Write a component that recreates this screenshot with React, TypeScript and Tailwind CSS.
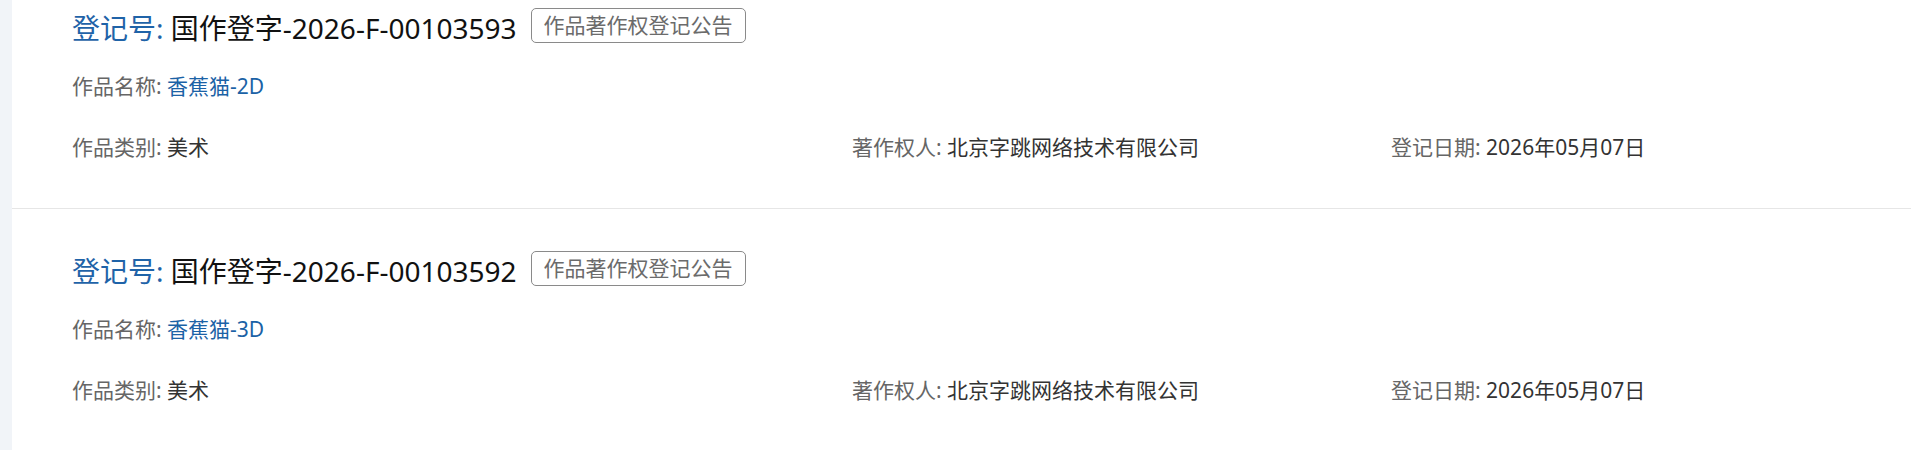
import React from "react";

type Record = {
  regNo: string;
  name: string;
  category: string;
  owner: string;
  date: string;
};

const records: Record[] = [
  {
    regNo: "国作登字-2026-F-00103593",
    name: "香蕉猫-2D",
    category: "美术",
    owner: "北京字跳网络技术有限公司",
    date: "2026年05月07日",
  },
  {
    regNo: "国作登字-2026-F-00103592",
    name: "香蕉猫-3D",
    category: "美术",
    owner: "北京字跳网络技术有限公司",
    date: "2026年05月07日",
  },
];

function Field({ label, value, valueClass }: { label: string; value: string; valueClass?: string }) {
  return (
    <div className="whitespace-nowrap">
      <span className="text-[#666666]">{label}: </span>
      <span className={valueClass ?? "text-[#333333]"}>{value}</span>
    </div>
  );
}

function RecordItem({ r }: { r: Record }) {
  return (
    <div className="border-b border-[#e6e6e6] pl-[60px] pr-8 pt-[40px] pb-[46px]">
      <div className="flex h-[44px] items-center">
        <div className="text-[28px] leading-none whitespace-nowrap">
          <span className="text-[#1f63a8]">登记号:</span>
          <span className="text-[#111111]"> {r.regNo}</span>
        </div>
        <span className="ml-[14px] inline-flex h-[35px] items-center rounded-[5px] border border-[#8a8a8a] px-[12px] text-[21px] text-[#6b6b6b] -mt-[5px]">
          作品著作权登记公告
        </span>
      </div>
      <div className="mt-[22px] flex h-[30px] items-center text-[21px]">
        <Field label="作品名称" value={r.name} valueClass="text-[#1b62a6]" />
      </div>
      <div className="mt-[30px] grid h-[30px] grid-cols-[780px_539px_1fr] items-center text-[21px]">
        <Field label="作品类别" value={r.category} />
        <Field label="著作权人" value={r.owner} />
        <Field label="登记日期" value={r.date} />
      </div>
    </div>
  );
}

export default function App() {
  return (
    <div
      className="flex h-[450px] w-full overflow-hidden bg-white"
      style={{ fontFamily: '"Noto Sans", "Noto Sans CJK SC", sans-serif' }}
    >
      <div className="w-[12px] shrink-0 bg-[#f1f4f8]" />
      <div className="flex-1">
        <div className="-mt-[34px]">
          {records.map((r) => (
            <RecordItem key={r.regNo} r={r} />
          ))}
        </div>
      </div>
    </div>
  );
}
